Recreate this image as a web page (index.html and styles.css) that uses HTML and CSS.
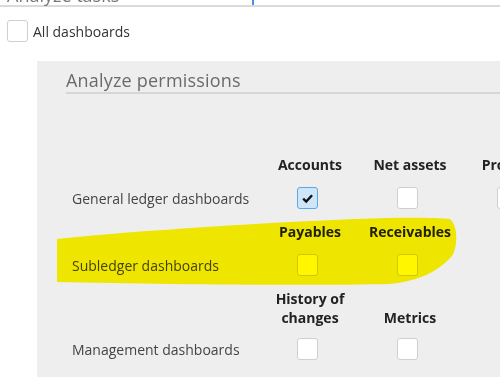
FILE: index.html
```html
<!DOCTYPE html>
<html lang="en">
  <head>
    <meta charset="UTF-8" />
    <meta name="viewport" content="width=device-width, initial-scale=1.0" />
    <title>Analyze permissions</title>
    <link rel="stylesheet" href="styles.css">
  </head>
  <body>
    <div class="page">
      <h2 class="section-title">Analyze tasks<span class="caret"></span></h2>

      <label class="check-row">
        <span class="box"></span>
        All dashboards
      </label>

      <div class="panel">
        <h3 class="panel-title">Analyze permissions</h3>

        <div class="perm-grid">
          <div class="head"></div>
          <div class="head">Accounts</div>
          <div class="head">Net assets</div>
          <div class="head">Projects</div>
          <div class="label">General ledger dashboards</div>
          <div class="cell"><span class="box checked"><svg viewBox="0 0 12 12" width="13" height="13"><path d="M2 6.2l2.8 2.7L10.2 3" fill="none" stroke="#111" stroke-width="2.2"/></svg></span></div>
          <div class="cell"><span class="box"></span></div>
          <div class="cell"><span class="box"></span></div>

          <div class="head"></div>
          <div class="head">Payables</div>
          <div class="head">Receivables</div>
          <div class="head"></div>
          <div class="label">Subledger dashboards</div>
          <div class="cell"><span class="box"></span></div>
          <div class="cell"><span class="box"></span></div>
          <div class="cell"></div>

          <div class="head"></div>
          <div class="head">History of<br>changes</div>
          <div class="head">Metrics</div>
          <div class="head"></div>
          <div class="label last">Management dashboards</div>
          <div class="cell last"><span class="box"></span></div>
          <div class="cell last"><span class="box"></span></div>
          <div class="cell last"></div>
        </div>
      </div>

      <!-- marker highlight drawn over the subledger row -->
      <svg class="highlight" width="500" height="383" viewBox="0 0 500 383">
        <path d="M57,239 C120,232 220,226 290,222 C350,219 420,216 450,219 C458,226 458,246 452,256 C440,270 420,281 390,284 C300,286 150,284 57,282 Z" fill="#fff600"/>
      </svg>
    </div>
  </body>
</html>
```

FILE: styles.css
```css
html,
body {
  margin: 0;
  overflow: hidden;
}
body {
  font-family: "Open Sans", "Noto Sans", sans-serif;
  color: #444;
  background: #fff;
}
.page {
  position: relative;
  width: 500px;
  height: 383px;
  overflow: hidden;
}
.section-title {
  position: relative;
  margin: -15px 0 0 0;
  padding-left: 7px;
  font-size: 18px;
  font-weight: normal;
  line-height: 20px;
  color: #777;
  border-bottom: 2px solid #dadada;
}
.caret {
  position: absolute;
  left: 252px;
  top: 15px;
  width: 2px;
  height: 5px;
  background: #4a90e2;
}
.check-row {
  display: flex;
  align-items: center;
  gap: 5px;
  margin: 13px 0 0 7px;
  font-size: 14px;
  color: #333;
}
.box {
  display: inline-flex;
  align-items: center;
  justify-content: center;
  width: 19px;
  height: 20px;
  background: #fff;
  border: 1px solid #cfcfcf;
  border-radius: 3px;
}
.box.checked {
  background: #cde6fa;
  border-color: #5aa8e6;
}
.panel {
  margin: 19px 0 0 37px;
  width: 500px;
  height: 316px;
  padding: 7px 0 0 29px;
  box-sizing: border-box;
  background: #eeeeee;
}
.panel-title {
  margin: 0;
  font-size: 18px;
  font-weight: normal;
  line-height: 24px;
  color: #6a6a6a;
  letter-spacing: 0.2px;
  border-bottom: 2px solid #d6d6d6;
}
.perm-grid {
  display: grid;
  grid-template-columns: 188px 100px 100px 100px;
  margin: 54px 0 0 6px;
}
.head {
  padding-top: 7px;
  font-size: 14px;
  font-weight: bold;
  line-height: 19px;
  color: #222;
  text-align: center;
  align-self: end;
}
.label {
  display: flex;
  align-items: center;
  height: 34px;
  padding-top: 7px;
  font-size: 14px;
  color: #444;
}
.cell {
  display: flex;
  align-items: center;
  justify-content: center;
  height: 34px;
  padding: 7px 5px 0 0;
}
.last {
  padding-top: 5px;
}
.highlight {
  position: absolute;
  left: 0;
  top: 0;
  mix-blend-mode: multiply;
  pointer-events: none;
}
```
